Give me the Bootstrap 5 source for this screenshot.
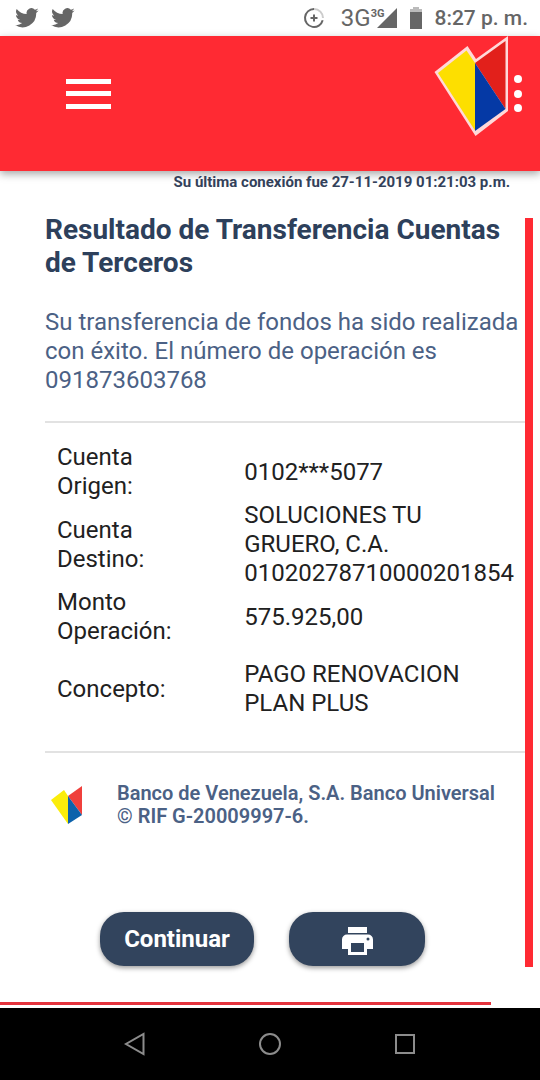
<!DOCTYPE html>
<html lang="es">
<head>
<meta charset="utf-8">
<meta name="viewport" content="width=device-width, initial-scale=1">
<title>Resultado de Transferencia</title>
<link href="https://cdn.jsdelivr.net/npm/bootstrap@5.3.0/dist/css/bootstrap.min.css" rel="stylesheet">
<style>
  body { font-family: Roboto, "Noto Sans", sans-serif; background: #fff; color: #212121; }
  svg { display: block; flex: none; }
  .status-bar { height: 36px; padding: 0 12px 0 15px; color: #666; font-size: 21px; line-height: 36px; font-weight: 500; }
  .status-birds { gap: 12px; }
  .net-label { font-size: 24px; font-weight: 400; }
  .net-sup { font-size: 11px; line-height: 12px; font-weight: 700; }
  .net-signal { margin-left: -7px; }
  .battery { margin: 0 12px 0 13px; }
  .app-bar { height: 135px; background: #ff2a33; padding: 0 15px 0 66px; box-shadow: 0 3px 8px rgba(0,0,0,.35); }
  .app-bar .btn { --bs-btn-border-width: 0; margin-bottom: 20px; }
  .bank-logo { margin-bottom: 34px; }
  .last-login { font-size: 15px; line-height: 22px; font-weight: 700; color: #33415a; padding-right: 30px; }
  .result { padding: 20px 7px 0 45px; }
  .side-line { width: 8px; background: #ff2a33; margin-top: 5px; }
  h1 { font-size: 28px; line-height: 33px; font-weight: 700; color: #2d405b; }
  .message { font-size: 24px; line-height: 29px; color: #4b6185; margin: 29px 0 26px; }
  .rule { border-top: 2px solid #e2e2e2; }
  .details { font-size: 24px; line-height: 29px; margin: 20px 0 19px; }
  .details th, .details td { padding: 0 8px 0 12px; vertical-align: middle; font-weight: 400; }
  .details th { width: 39%; padding-right: 40px; }
  .details tr:last-child > * { padding-top: 14px; padding-bottom: 14px; }
  .bank { font-size: 20px; line-height: 23px; font-weight: 600; color: #4b6185; padding: 29px 0 0 6px; column-gap: 34px; }
  .actions { padding: 84px 0 1px 55px; gap: 35px; }
  .btn-action { height: 54px; border-radius: 24px; background: #32445d; color: #fff; font-size: 24px; line-height: 29px; font-weight: 700; box-shadow: 0 2px 5px rgba(0,0,0,.4); border: 0; }
  .btn-action:hover { background: #3d516d; color: #fff; }
  .btn-go { width: 154px; }
  .btn-print { width: 136px; }
  .scroll-line { width: 91%; height: 3px; background: #e5333d; margin: 35px 0 3px; }
  .nav-keys { height: 72px; background: #000; padding: 0 68px; }
  .nav-keys .btn { border: 0; }
</style>
</head>
<body>
<div class="d-flex flex-column min-vh-100">
  <div class="status-bar d-flex align-items-center">
    <div class="status-birds d-flex">
      <svg width="24" height="20" viewBox="0 0 24 20" fill="#666"><path id="bird" d="M23.600 2.400a9.600 9.600 0 0 1-2.800.8A4.800 4.800 0 0 0 23 .5a9.700 9.700 0 0 1-3.100 1.200A4.800 4.800 0 0 0 11.700 6.100 13.700 13.700 0 0 1 1.700 1a4.800 4.800 0 0 0 1.500 6.500 4.800 4.800 0 0 1-2.200-.6c0 2.300 1.600 4.300 3.900 4.800a4.800 4.800 0 0 1-2.200.1 4.800 4.800 0 0 0 4.500 3.300A9.700 9.700 0 0 1 .1 17.100 13.700 13.700 0 0 0 21.200 4.900a9.700 9.700 0 0 0 2.400-2.500Z"/></svg>
      <svg width="24" height="20" viewBox="0 0 24 20" fill="#666"><use href="#bird"/></svg>
    </div>
    <svg class="ms-auto me-3" width="22" height="22" viewBox="0 0 22 22" fill="none" stroke-width="2"><path d="M11 2a9 9 0 0 1 9 9" stroke="#ccc"/><path d="M11 2a9 9 0 1 0 8.700 11.300" stroke="#666"/><path d="M11 7.500v7M7.500 11h7" stroke="#666"/></svg>
    <span class="net-label">3G</span>
    <span class="net-sup align-self-start pt-1 mt-1">3G</span>
    <svg class="net-signal" width="20" height="20" viewBox="0 0 20 20"><path d="M20 0v20H0Z" fill="#666"/></svg>
    <svg class="battery" width="12" height="22" viewBox="0 0 12 22"><path d="M3 0h6v2h3v3H0V2h3Z" fill="#bbb"/><path d="M0 5h12v17H0Z" fill="#666"/></svg>
    <span>8:27 p. m.</span>
  </div>

  <header class="app-bar d-flex align-items-center">
    <button class="btn p-0" type="button" aria-label="Menú">
      <svg width="45" height="30" viewBox="0 0 45 30" fill="#fff"><path d="M0 0h45v5H0zM0 12h45v5H0zM0 25h45v5H0z"/></svg>
    </button>
    <svg class="bank-logo ms-auto" width="78" height="101" viewBox="0 0 78 101">
      <path d="M1.500 36 34.500 10 43 23 75 0v75L42.500 100Z" fill="#ffd9d9"/>
      <path d="M5 37 33.500 14.500 42 27v67.500Z" fill="#fddf00"/><path d="M42 27 72.500 5v68Z" fill="#e2201b"/><path d="M42 27 72.500 73 42 95Z" fill="#0539a5"/>
    </svg>
    <button class="btn p-0" type="button" aria-label="Más opciones">
      <svg width="14" height="40" viewBox="0 0 14 40" fill="#fff"><circle cx="7" cy="5" r="4"/><circle cx="7" cy="20" r="4"/><circle cx="7" cy="34" r="4"/></svg>
    </button>
  </header>
  <div class="last-login text-end">Su última conexión fue 27-11-2019 01:21:03 p.m.</div>

  <main class="result d-flex">
    <div class="flex-fill">
      <h1 class="m-0">Resultado de Transferencia Cuentas de Terceros</h1>
      <p class="message">Su transferencia de fondos ha sido realizada con éxito. El número de operación es 091873603768</p>
      <div class="rule"></div>
      <table class="details w-100">
        <tbody>
          <tr><th scope="row">Cuenta Origen:</th><td>0102***5077</td></tr>
          <tr><th scope="row">Cuenta Destino:</th><td>SOLUCIONES TU GRUERO, C.A.<br>01020278710000201854</td></tr>
          <tr><th scope="row">Monto Operación:</th><td>575.925,00</td></tr>
          <tr><th scope="row">Concepto:</th><td>PAGO RENOVACION PLAN PLUS</td></tr>
        </tbody>
      </table>
      <div class="rule"></div>
      <div class="bank d-flex align-items-center">
        <svg width="32" height="39" viewBox="0 0 32 39"><path d="M0 14 13 4l4 6v28Z" fill="#fbed0b"/><path d="M17 10 31 0v29Z" fill="#f0403c"/><path d="M17 10 31 29 17 38Z" fill="#0c62ab"/></svg>
        <div>Banco de Venezuela, S.A. Banco Universal<br>© RIF G-20009997-6.</div>
      </div>
      <div class="actions d-flex">
        <button class="btn btn-action btn-go p-0" type="button">Continuar</button>
        <button class="btn btn-action btn-print d-flex align-items-center justify-content-center p-0" type="button" aria-label="Imprimir">
          <svg class="mt-1" width="31" height="28" viewBox="0 0 31 28" fill="#fff"><path d="M6 0h19v6H6z"/><path fill-rule="evenodd" d="M5 7.500h21a5 5 0 0 1 5 5V22h-6v6H6v-6H0v-9.500a5 5 0 0 1 5-5ZM9 16v9h13v-9Zm17-5.500a1.500 1.500 0 1 0 0 3 1.500 1.500 0 0 0 0-3Z"/></svg>
        </button>
      </div>
    </div>
    <div class="side-line flex-shrink-0"></div>
  </main>

  <div class="scroll-line"></div>
  <nav class="nav-keys d-flex align-items-center mt-auto" aria-label="Sistema">
    <button class="btn p-0 flex-fill d-flex justify-content-center" type="button" aria-label="Atrás"><svg width="24" height="24" viewBox="0 0 24 24" fill="none" stroke="#8c8c8c" stroke-width="2"><path d="M20.500 2v20L3 12Z"/></svg></button>
    <button class="btn p-0 flex-fill d-flex justify-content-center" type="button" aria-label="Inicio"><svg width="24" height="24" viewBox="0 0 24 24" fill="none" stroke="#8c8c8c" stroke-width="2"><circle cx="12" cy="12" r="10"/></svg></button>
    <button class="btn p-0 flex-fill d-flex justify-content-center" type="button" aria-label="Recientes"><svg width="24" height="24" viewBox="0 0 24 24" fill="none" stroke="#8c8c8c" stroke-width="2"><rect x="3" y="3" width="18" height="18"/></svg></button>
  </nav>
</div>
<script src="https://cdn.jsdelivr.net/npm/bootstrap@5.3.0/dist/js/bootstrap.bundle.min.js"></script>
</body>
</html>
